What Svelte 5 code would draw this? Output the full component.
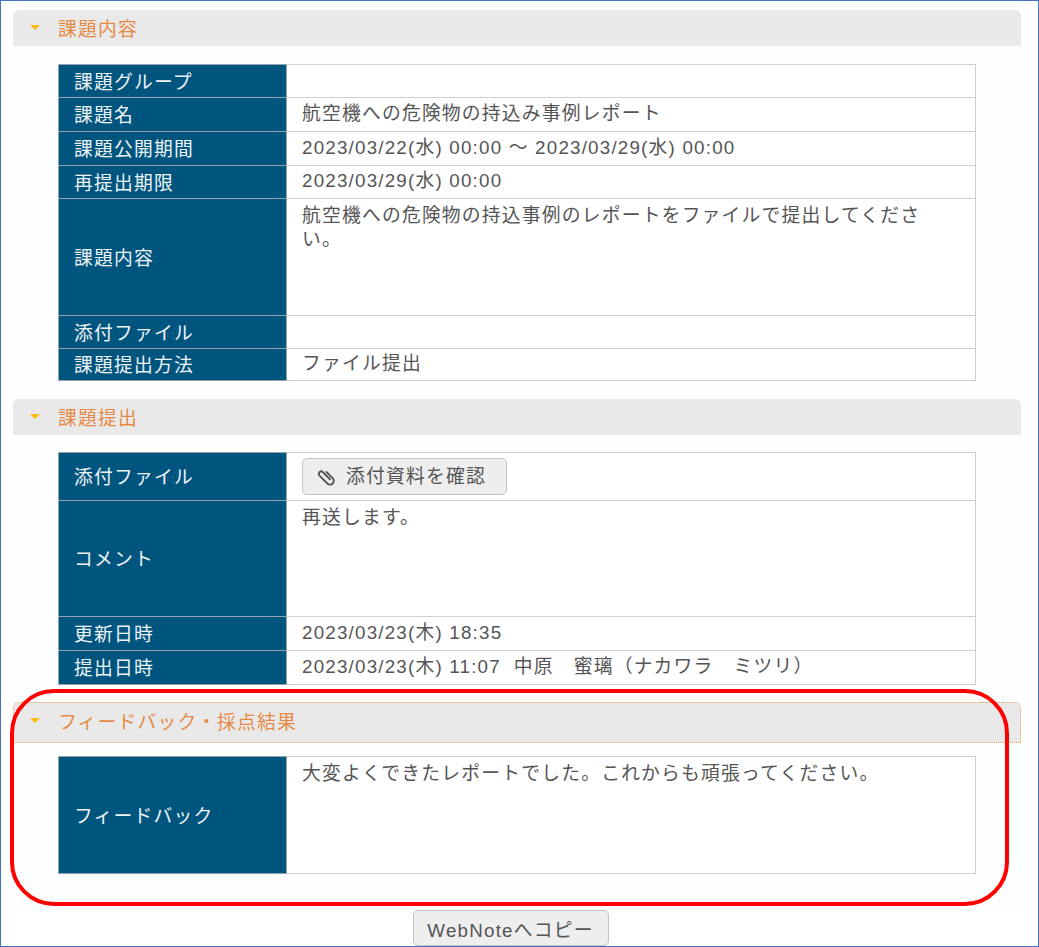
<script>
    const task = [
        { label: "課題グループ", value: "", h: 33 },
        { label: "課題名", value: "航空機への危険物の持込み事例レポート", h: 34 },
        { label: "課題公開期間", value: "2023/03/22(水) 00:00 ～ 2023/03/29(水) 00:00", h: 34 },
        { label: "再提出期限", value: "2023/03/29(水) 00:00", h: 33 },
        { label: "課題内容", value: "航空機への危険物の持込事例のレポートをファイルで提出してください。", h: 117, top: true },
        { label: "添付ファイル", value: "", h: 33 },
        { label: "課題提出方法", value: "ファイル提出", h: 32 },
    ];
    const submit = [
        { label: "添付ファイル", button: true, h: 48 },
        { label: "コメント", value: "再送します。", h: 116, top: true },
        { label: "更新日時", value: "2023/03/23(木) 18:35", h: 34 },
        { label: "提出日時", value: "2023/03/23(木) 11:07\u00a0\u00a0中原　蜜璃（ナカワラ　ミツリ）", h: 34 },
    ];
    const feedback = [
        { label: "フィードバック", value: "大変よくできたレポートでした。これからも頑張ってください。", h: 117, top: true },
    ];
    const sections = [
        { title: "課題内容", rows: task },
        { title: "課題提出", rows: submit },
        { title: "フィードバック・採点結果", rows: feedback, active: true },
    ];
</script>

<div class="frame">
    <div class="content">
        {#each sections as s}
            <div class="head" class:active={s.active}>
                <span class="caret"></span>
                <span class="title">{s.title}</span>
            </div>
            <table class:fb={s.active}>
                <tbody>
                    {#each s.rows as r}
                        <tr style="height: {r.h}px">
                            <th>{r.label}</th>
                            <td class:top={r.top}>
                                {#if r.button}
                                    <button class="btn attach">
                                        <svg width="20" height="20" viewBox="0 0 18 18" fill="none" stroke="#555" stroke-width="1.7" stroke-linecap="round">
                                            <path transform="rotate(45 9 9)" d="M6 5.5h8a3.2 3.2 0 0 1 0 6.8H4a2.2 2.2 0 0 1 0-4.4h9" />
                                        </svg>
                                        添付資料を確認
                                    </button>
                                {:else}
                                    {r.value}
                                {/if}
                            </td>
                        </tr>
                    {/each}
                </tbody>
            </table>
        {/each}
        <div class="foot">
            <button class="btn copy">WebNoteへコピー</button>
        </div>
    </div>
    <div class="mark"></div>
</div>

<style>
    :global(body) {
        margin: 0;
        background: #fff;
    }
    .frame {
        position: relative;
        box-sizing: border-box;
        width: 1039px;
        height: 947px;
        overflow: hidden;
        border: 1px solid #4472c4;
        padding: 9px 17px 0 12px;
        font-family: "Liberation Sans", "Noto Sans CJK JP", sans-serif;
        font-size: 18.8px;
        letter-spacing: 1.2px;
        color: #555;
    }
    .content {
        background: #fdfefe;
    }
    .head {
        display: flex;
        align-items: center;
        height: 36px;
        box-sizing: border-box;
        padding: 0 0 2px 17px;
        background: #e9e9e9;
        border-radius: 6px 6px 0 0;
    }
    .head.active {
        height: 41px;
        margin-top: -1px;
        border: 1px dotted #f2a55c;
        padding: 0 0 4px 16px;
    }
    .caret {
        width: 0;
        height: 0;
        border-left: 5px solid transparent;
        border-right: 5px solid transparent;
        border-top: 5px solid #fdb813;
        margin-right: 18px;
    }
    .title {
        color: #e58a45;
    }
    table {
        border-collapse: collapse;
        table-layout: fixed;
        width: 918px;
        margin: 17px 0 18px 45px;
        background: #fff;
    }
    .head:first-child + table {
        margin-top: 18px;
    }
    table.fb {
        margin-top: 13px;
        margin-bottom: 36px;
    }
    th {
        width: 228px;
        box-sizing: border-box;
        background: #00557f;
        border: 1px solid #8fa3b0;
        color: #eef3f6;
        font-weight: 400;
        text-align: left;
        padding: 0 0 2px 15px;
    }
    td {
        border: 1.5px solid #cfcfcf;
        padding: 0 50px 2px 15px;
        line-height: 24px;
    }
    td.top {
        vertical-align: top;
        padding-top: 5px;
    }
    .btn {
        font: inherit;
        letter-spacing: inherit;
        color: #555;
        background: #eee;
        border: 1px solid #c4c4c4;
        border-radius: 5px;
        padding: 0;
    }
    .attach {
        display: flex;
        align-items: center;
        gap: 10px;
        width: 205px;
        height: 37px;
        margin-top: 2px;
        padding-left: 13px;
    }
    .foot {
        display: flex;
        justify-content: center;
        background: #fff;
        padding-right: 13px;
    }
    .copy {
        width: 196px;
        height: 36px;
    }
    .mark {
        position: absolute;
        left: 9px;
        top: 688px;
        width: 991px;
        height: 209px;
        border: 4px solid #f00;
        border-radius: 44px;
        pointer-events: none;
    }
</style>
